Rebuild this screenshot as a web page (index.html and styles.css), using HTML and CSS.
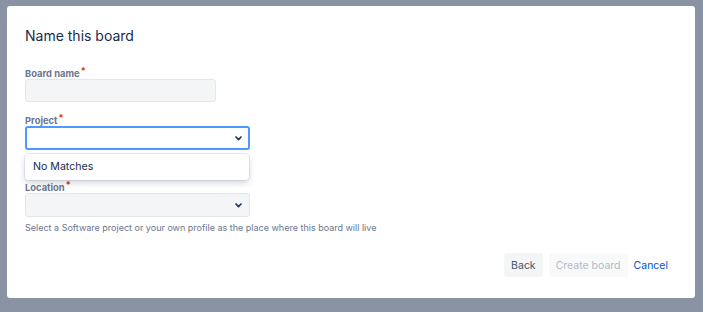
FILE: index.html
```html
<!DOCTYPE html>
<html>
<head>
<meta charset="utf-8">
<link rel="stylesheet" href="styles.css">
</head>
<body>
<div class="modal">
  <h1 class="title">Name this board</h1>
  <div class="field field-name">
    <label class="label">Board name<span class="req">*</span></label>
    <div class="input"></div>
  </div>
  <div class="field field-project">
    <label class="label">Project<span class="req">*</span></label>
    <div class="select focused">
      <svg class="chev" width="7" height="5" viewBox="0 0 7 5"><path d="M1 1 L3.5 3.6 L6 1" fill="none" stroke="#253858" stroke-width="1.7" stroke-linecap="round" stroke-linejoin="round"/></svg>
    </div>
    <div class="menu">No Matches</div>
  </div>
  <div class="field field-location">
    <label class="label">Location<span class="req">*</span></label>
    <div class="select">
      <svg class="chev" width="7" height="5" viewBox="0 0 7 5"><path d="M1 1 L3.5 3.6 L6 1" fill="none" stroke="#253858" stroke-width="1.7" stroke-linecap="round" stroke-linejoin="round"/></svg>
    </div>
    <div class="help">Select a Software project or your own profile as the place where this board will live</div>
  </div>
  <div class="footer">
    <button class="btn btn-back">Back</button>
    <button class="btn btn-create" disabled>Create board</button>
    <button class="btn btn-cancel">Cancel</button>
  </div>
</div>
</body>
</html>
```
FILE: styles.css
```css
html, body {
  margin: 0;
  padding: 0;
  background: #8993a4;
  font-family: Inter, "Noto Sans", "Liberation Sans", sans-serif;
  color: #172b4d;
}
body {
  padding: 6px 8px 14px 7px;
  height: 312px;
  box-sizing: border-box;
}
.modal {
  width: 688px;
  height: 292px;
  box-sizing: border-box;
  background: #fff;
  border-radius: 3px;
  padding: 20px 21px 0 18px;
  display: flex;
  flex-direction: column;
}
.title {
  margin: 0;
  font-size: 14px;
  font-weight: 400;
  line-height: 20px;
  color: #172b4d;
}
.field {
  display: flex;
  flex-direction: column;
  position: relative;
}
.field-name { margin-top: 19px; }
.label {
  display: block;
  font-size: 9.4px;
  font-weight: 700;
  color: #6b778c;
  line-height: 18px;
  height: 14px;
}
.req {
  color: #de350b;
  font-size: 9px;
  position: relative;
  top: -3px;
  margin-left: 1px;
}
.input {
  width: 191px;
  height: 23px;
  box-sizing: border-box;
  background: #f4f5f7;
  border: 1px solid #e4e6ea;
  border-radius: 3px;
}
.field-project { margin-top: 10px; }
.field-location { margin-top: 29px; }
.select {
  width: 225px;
  height: 24px;
  box-sizing: border-box;
  background: #f4f5f7;
  border: 1px solid #e4e6ea;
  border-radius: 3px;
  display: flex;
  align-items: center;
  justify-content: flex-end;
  padding-right: 7px;
}
.select.focused {
  background: #fff;
  border: 2px solid #4c9aff;
  padding-right: 6px;
}
.chev { display: block; }
.menu {
  position: absolute;
  top: 42px;
  left: 0;
  width: 224px;
  height: 26px;
  box-sizing: border-box;
  background: #fff;
  border-radius: 4px;
  box-shadow: 0 0 0 1px rgba(9,30,66,0.08), 0 3px 6px rgba(9,30,66,0.18);
  font-size: 10.6px;
  line-height: 26px;
  padding-left: 8px;
  color: #172b4d;
  z-index: 2;
}
.help {
  margin-top: 4px;
  font-size: 9px;
  line-height: 14px;
  color: #6b778c;
}
.footer {
  margin-top: 18px;
  display: flex;
  justify-content: flex-end;
  align-items: center;
}
.btn {
  font-family: inherit;
  font-size: 10.5px;
  height: 24px;
  border: none;
  border-radius: 3px;
  padding: 0 7px;
  margin: 0;
  cursor: pointer;
}
.btn-back {
  background: #f4f5f7;
  color: #42526e;
}
.btn-create {
  margin-left: 6px;
  background: #f8f9fa;
  color: #b3bac5;
}
.btn-cancel {
  background: transparent;
  color: #0052cc;
  padding: 0 6px;
  margin-left: 0;
}
```
